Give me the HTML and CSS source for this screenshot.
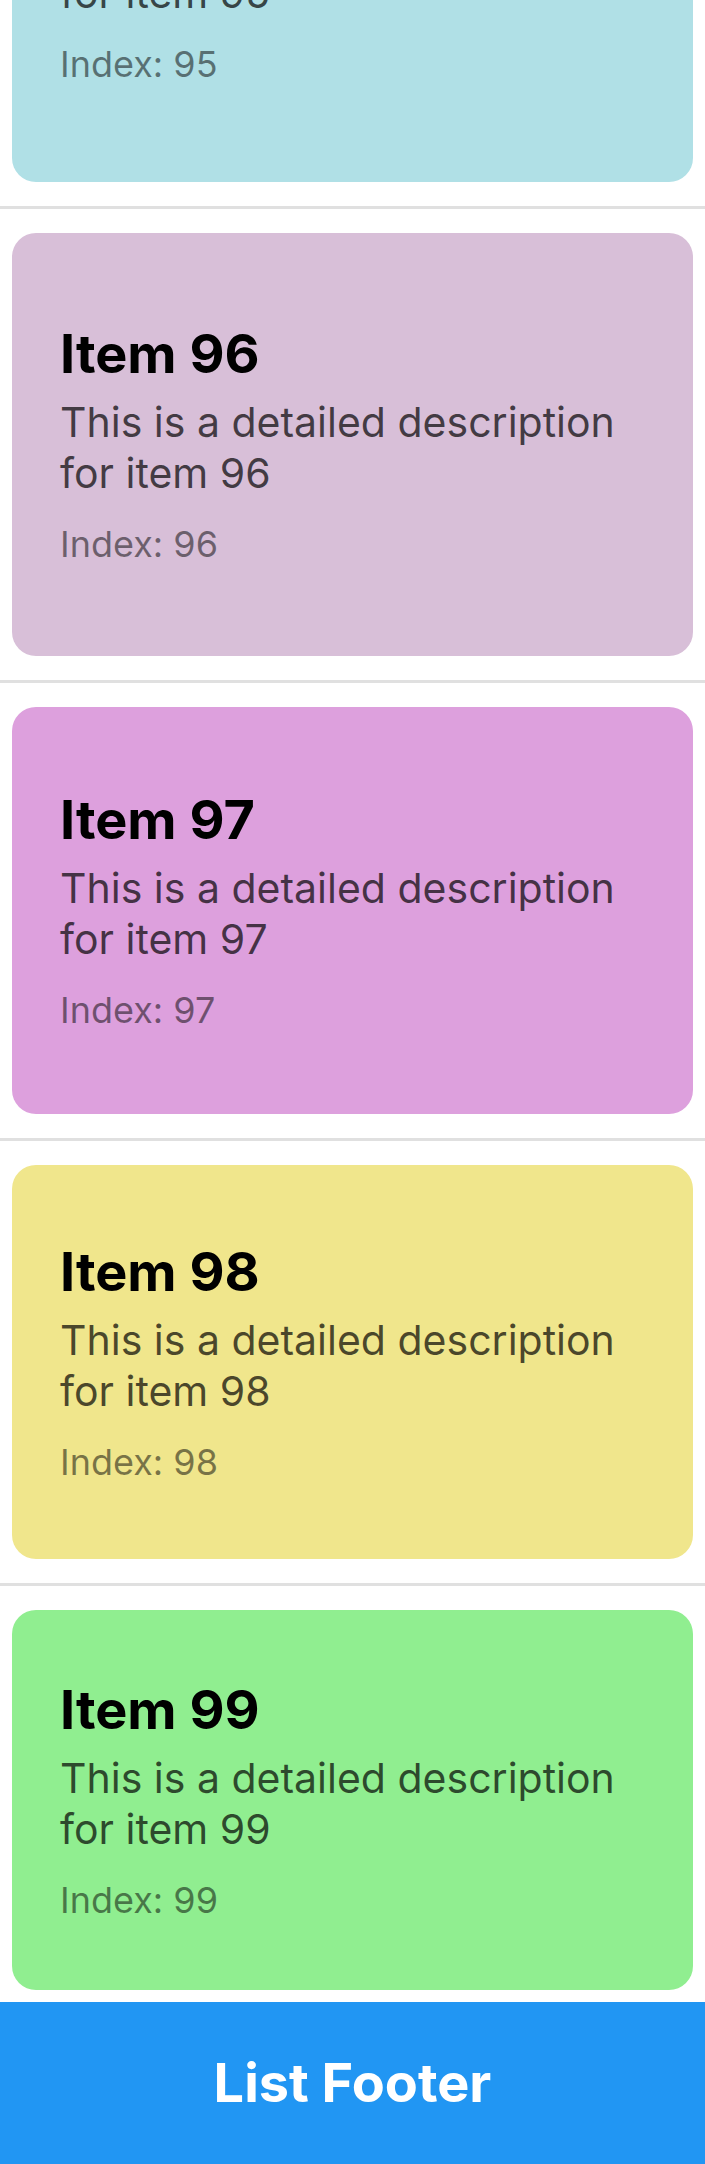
FILE: index.html
```html
<!DOCTYPE html>
<html lang="en">
<head>
<meta charset="utf-8">
<title>List</title>
<link rel="stylesheet" href="styles.css">
</head>
<body>
<div class="screen">
  <div class="list">
    <div class="card card-95">
      <div class="title">Item 95</div>
      <div class="desc">This is a detailed description for item 95</div>
      <div class="index">Index: 95</div>
    </div>
    <div class="separator"></div>
    <div class="card card-96">
      <div class="title">Item 96</div>
      <div class="desc">This is a detailed description for item 96</div>
      <div class="index">Index: 96</div>
    </div>
    <div class="separator"></div>
    <div class="card card-97">
      <div class="title">Item 97</div>
      <div class="desc">This is a detailed description for item 97</div>
      <div class="index">Index: 97</div>
    </div>
    <div class="separator"></div>
    <div class="card card-98">
      <div class="title">Item 98</div>
      <div class="desc">This is a detailed description for item 98</div>
      <div class="index">Index: 98</div>
    </div>
    <div class="separator"></div>
    <div class="card card-99">
      <div class="title">Item 99</div>
      <div class="desc">This is a detailed description for item 99</div>
      <div class="index">Index: 99</div>
    </div>
  </div>
  <div class="footer">List Footer</div>
</div>
</body>
</html>
```
FILE: styles.css
```css
* {
  box-sizing: border-box;
}

html, body {
  margin: 0;
  padding: 0;
  background: #ffffff;
}

body {
  font-family: Inter, "Noto Sans", "Liberation Sans", sans-serif;
  overflow: hidden;
}

.screen {
  width: 705px;
  height: 2164px;
  overflow: hidden;
  display: flex;
  flex-direction: column;
}

.list {
  display: flex;
  flex-direction: column;
  margin-top: -265px;
}

.card {
  margin: 12px;
  padding: 0 48px;
  border-radius: 24px;
  display: flex;
  flex-direction: column;
  justify-content: center;
}

.card-95 { background: #b0e0e6; height: 435px; }
.card-96 { background: #d8bfd8; height: 423px; }
.card-97 { background: #dda0dd; height: 407px; }
.card-98 { background: #f0e68c; height: 394px; }
.card-99 { background: #90ee90; height: 380px; }

.title {
  font-size: 54px;
  line-height: 62px;
  font-weight: 700;
  color: #000000;
  margin-bottom: 12px;
}

.desc {
  font-size: 41px;
  line-height: 51px;
  color: rgba(0, 0, 0, 0.7);
  margin-bottom: 24px;
}

.index {
  font-size: 36px;
  line-height: 43px;
  color: rgba(0, 0, 0, 0.5);
}

.separator {
  height: 3px;
  background: #e0e0e0;
  margin: 12px 0;
}

.footer {
  background: #2196f3;
  color: #ffffff;
  font-size: 54px;
  font-weight: 700;
  text-align: center;
  padding: 48px 16px;
  flex: 1 0 auto;
}
```
